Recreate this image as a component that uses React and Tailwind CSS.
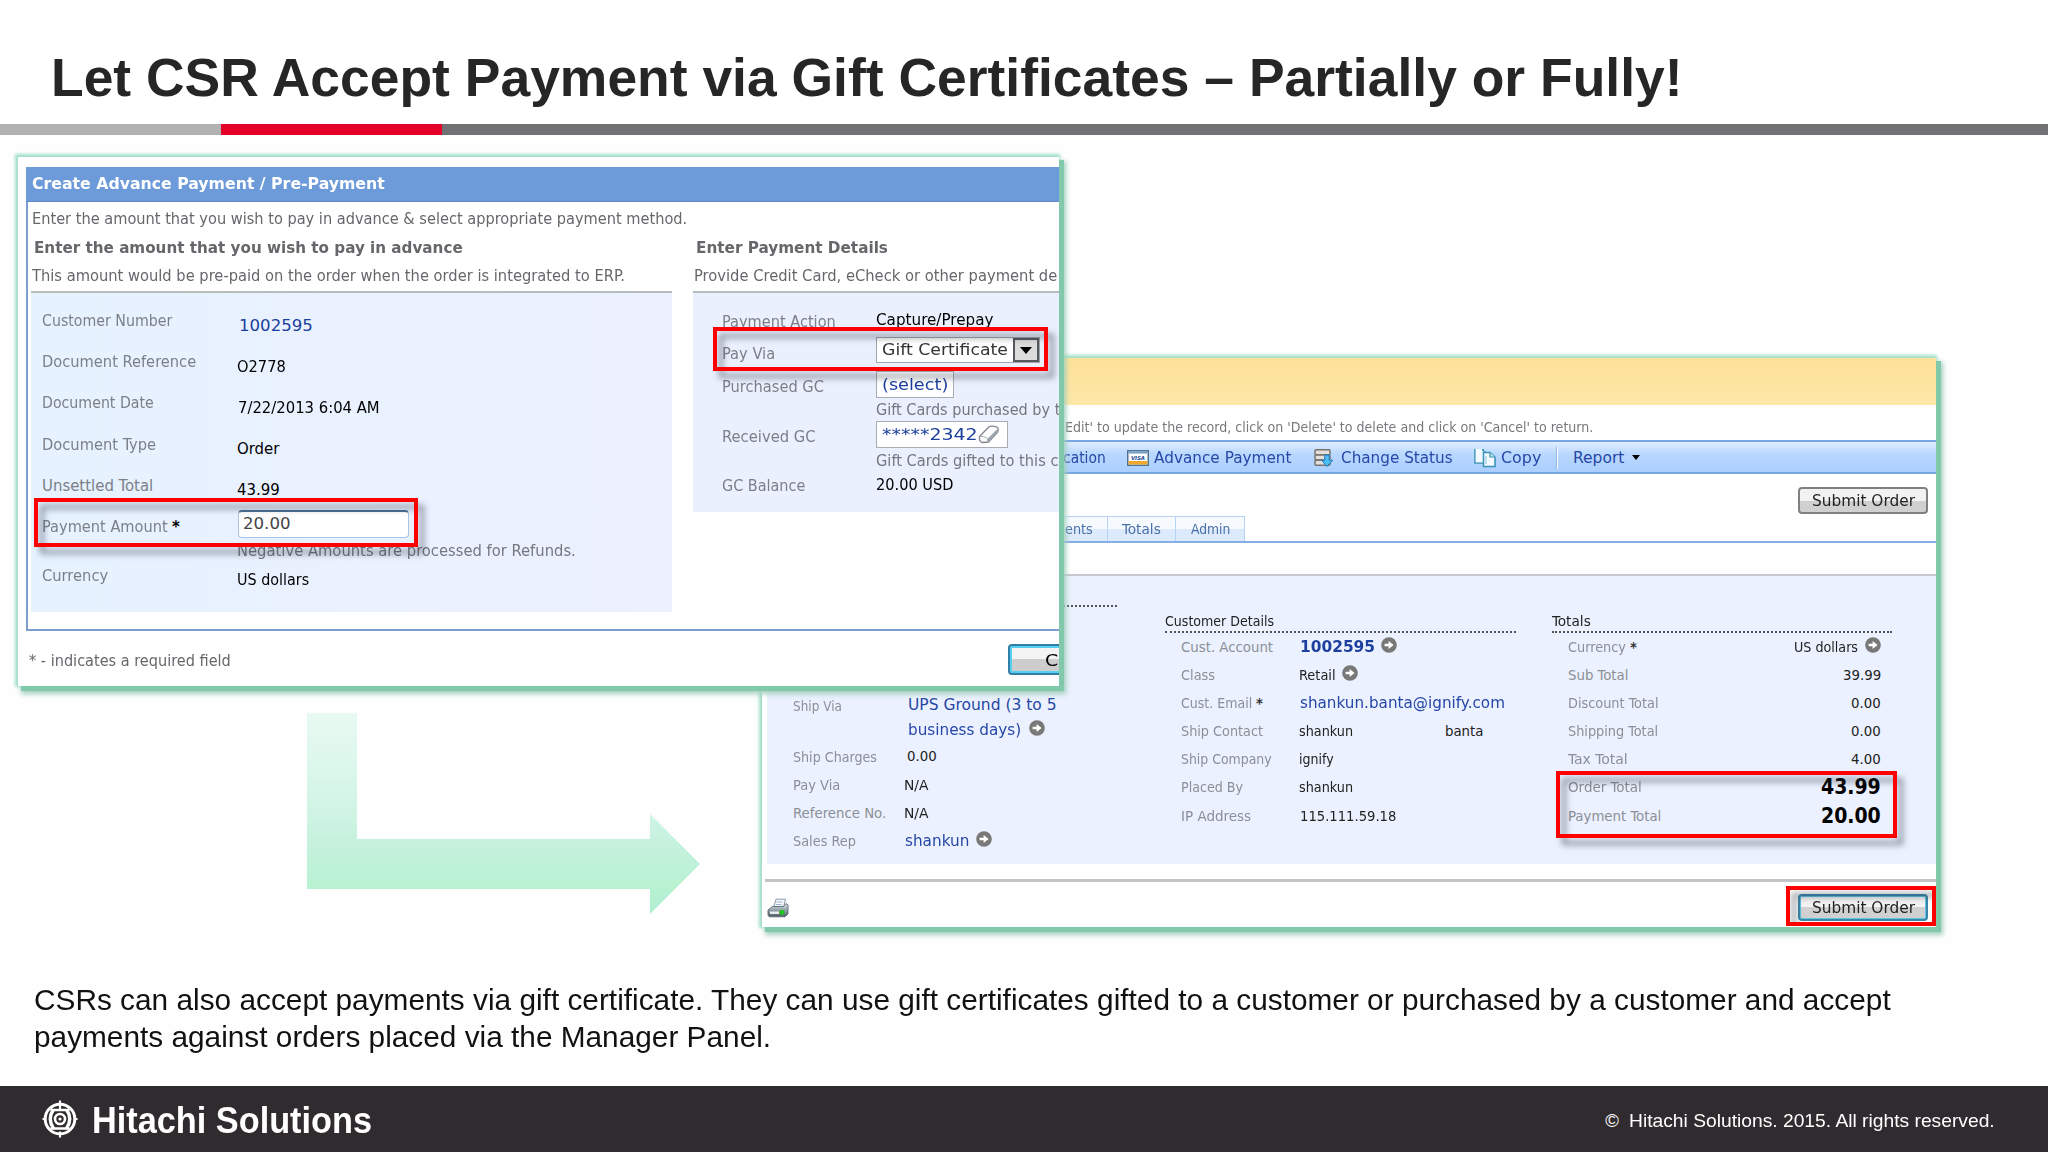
import { useLayoutEffect, useRef, useState } from "react";

const TAHOMA = "font-['DejaVu_Sans_Condensed','DejaVu_Sans',sans-serif]";
const VERDANA = "font-['DejaVu_Sans',sans-serif]";
const ARIAL = "font-['Liberation_Sans',sans-serif]";

/* A single line of text condensed or stretched to an exact width. */
function T({ w, className = "", children }) {
  const ref = useRef(null);
  const [scale, setScale] = useState(1);
  useLayoutEffect(() => {
    if (w) setScale(w / ref.current.offsetWidth);
  }, [w]);
  return (
    <span className={"block whitespace-nowrap " + className} style={w ? { width: w } : undefined}>
      <span
        ref={ref}
        className="inline-block origin-left whitespace-nowrap"
        style={{ transform: `scaleX(${scale})` }}
      >
        {children}
      </span>
    </span>
  );
}

function GoIcon({ className = "" }) {
  return (
    <svg viewBox="0 0 16 16" className={"h-4 w-4 shrink-0 " + className}>
      <circle cx="8" cy="8" r="7.8" fill="#787878" />
      <path d="M3.6 6.7h4V3.9L12.6 8l-5 4.1V9.3h-4z" fill="#fff" />
    </svg>
  );
}

function VisaIcon() {
  return (
    <svg viewBox="0 0 22 16" className="h-4 w-[22px] shrink-0">
      <rect x=".75" y=".75" width="20.5" height="14.5" fill="#fff" stroke="#4f7391" strokeWidth="1.5" />
      <rect x="1.5" y="1.5" width="19" height="2" fill="#6d9cc4" />
      <rect x="1.5" y="11" width="19" height="3.5" fill="#f0a72e" />
      <text x="4" y="9.6" fontSize="5.4" fontWeight="bold" fontStyle="italic" fill="#1e4c9a" textLength="14" className="font-['DejaVu_Sans',sans-serif]">
        VISA
      </text>
    </svg>
  );
}

function StatusIcon() {
  return (
    <svg viewBox="0 0 20 18" className="h-[18px] w-5 shrink-0">
      <g fill="#e4e1dc" stroke="#77736e" strokeWidth="1.5">
        <rect x="1" y=".8" width="15" height="5" rx="1.2" />
        <rect x="1" y="6" width="15" height="5" rx="1.2" />
        <rect x="1" y="11.2" width="15" height="5" rx="1.2" />
      </g>
      <path d="M10.8 6h4.4v5.2h3.6L13 17.4l-5.600-6.200h3.400z" fill="#4cc0f4" stroke="#2277bd" strokeWidth="1" />
    </svg>
  );
}

function CopyIcon() {
  return (
    <svg viewBox="0 0 22 20" className="h-5 w-[22px] shrink-0">
      <path d="M1 1v14h10" fill="#eef8fd" stroke="#3b93b5" strokeWidth="1.6" />
      <path d="M1.700 1h8.300v13.300H1.700z" fill="#f3fafe" />
      <path d="M8 1.500l3.500 3M9.500 1v3.500h3" fill="none" stroke="#3b93b5" strokeWidth="1.2" />
      <path d="M9.500 4.500h6.500l5 4.500v9.500H9.500z" fill="#f3fafe" stroke="#3b93b5" strokeWidth="1.600" />
      <path d="M16 4.500V9h5" fill="#bfe2f2" stroke="#3b93b5" strokeWidth="1.200" />
      <path d="M12 8v8" stroke="#8cc4dc" strokeWidth="1" />
    </svg>
  );
}

function PrinterIcon() {
  return (
    <svg viewBox="0 0 22 20" className="h-5 w-[22px]">
      <defs>
        <linearGradient id="prn" x1="0" y1="0" x2="0" y2="1">
          <stop offset="0" stopColor="#dfe5e9" />
          <stop offset=".5" stopColor="#93a0a8" />
          <stop offset="1" stopColor="#4b5962" />
        </linearGradient>
      </defs>
      <path d="M6.500 9.500L9 1.200h9.500L16.500 9.500z" fill="#f7fafd" stroke="#8a97a5" strokeWidth="1" />
      <path d="M9.500 4h6M8.800 6.500h6" stroke="#9fb3cf" strokeWidth="1" />
      <path d="M1 12l4.500-3.500h11L19 5.500l2 1.500v9l-3 2.800H2.500L1 17.500z" fill="url(#prn)" stroke="#5b6973" strokeWidth=".9" />
      <rect x="3" y="13.500" width="9" height="2.500" fill="#e8edf0" />
      <circle cx="15" cy="14.300" r="2.600" fill="#22c322" />
    </svg>
  );
}

function EraserIcon() {
  return (
    <svg viewBox="0 0 22 19" className="h-[19px] w-[22px] shrink-0">
      <path d="M1.500 11.500L10.500 2.200Q12.500.8 15 1.200L19 2Q20.800 3 20.200 5L19.500 7.500 10.500 17 4 17.500Q1 16.500 1.500 11.500z" fill="#fdfdfd" stroke="#84878e" strokeWidth="1.300" />
      <path d="M19.800 3.500L9.800 13.500 10 17.200 19.800 7.200z" fill="#9da4b0" />
      <path d="M2 11.500Q5 10.500 9.500 13.500V17" fill="none" stroke="#a8acb4" strokeWidth="1" />
    </svg>
  );
}

function HitachiMark() {
  return (
    <svg viewBox="0 0 36 38" className="h-[38px] w-9 shrink-0" fill="none" stroke="#fff">
      <circle cx="18" cy="19" r="14.8" strokeWidth="3" />
      <circle cx="18" cy="19" r="5" strokeWidth="2.600" />
      <circle cx="18" cy="19" r="1.600" fill="#fff" stroke="none" />
      <path d="M8.500 10h19M8.500 28.500h19" strokeWidth="2.600" />
      <path d="M11.500 9.500q-6.500 9.500 0 19M24.500 9.500q6.500 9.500 0 19" strokeWidth="3.400" />
      <path d="M18 .5v9M18 31.500v6M.5 19h3M32.500 19h3" strokeWidth="2.200" />
    </svg>
  );
}

function RedBox({ className }) {
  return (
    <div className={"absolute border-4 border-[#fe0000] drop-shadow-[6px_7px_3px_rgba(40,45,60,0.5)] " + className} />
  );
}

const PANEL =
  "absolute overflow-visible bg-white shadow-[4px_4px_0_1px_#82c8ab,5px_6px_5px_2px_#a3cfbc,-1px_-1px_3px_2px_#a2e0c8]";

function Field({ label, lw, className = "", children }) {
  return (
    <div className={"flex items-start " + className}>
      <div className="w-[195px] shrink-0 text-[#7c7f86]">
        <div className="flex gap-1">
          <T w={lw}>{label}</T>
          {label === "Payment Amount" && <span className="font-bold text-black">*</span>}
        </div>
      </div>
      <div className="text-black">{children}</div>
    </div>
  );
}

function PayField({ label, lw, labelPad = "", className = "", children }) {
  return (
    <div className={"flex items-start " + className}>
      <div className={"w-[154px] shrink-0 text-[#7c7f86] " + labelPad}>
        <T w={lw}>{label}</T>
      </div>
      <div className="text-black">{children}</div>
    </div>
  );
}

function PaymentPanel() {
  return (
    <div className={PANEL + " left-[18px] top-[22px] h-[529px] w-[1041px] text-[16.6px] leading-5 " + TAHOMA}>
      <div className="flex h-full flex-col overflow-hidden pl-2 pt-2.5">
        <div className="h-[464px] border-b-2 border-l-2 border-[#7b9fcf]">
          <div className="-ml-0.5 flex h-[35px] items-center border-b border-[#6288c6] bg-[#6d9bda] pl-1.5 font-bold text-white">
            <T w={353}>Create Advance Payment / Pre-Payment</T>
          </div>
          <div className="pl-1 pt-[7px] text-[#66676b]">
            <T w={655}>Enter the amount that you wish to pay in advance &amp; select appropriate payment method.</T>
          </div>
          <div className="flex pl-[3px] pt-[9px] text-[#66676b]">
            <div className="w-[641px] shrink-0">
              <T w={429} className="ml-[3px] font-bold">Enter the amount that you wish to pay in advance</T>
              <T w={593} className="ml-px mt-2">This amount would be pre-paid on the order when the order is integrated to ERP.</T>
              <div className="mt-[5px] h-[321px] border-t-2 border-[#b4bcbc] bg-linear-to-r from-[#e6f2ff] via-[#eaf1ff] to-[#ecf0ff] pl-[11px] pt-[18px]">
                <Field label="Customer Number" lw={130} className="h-[41px]">
                  <div className={"ml-0.5 pt-[5px] text-[#1b3f9c] " + VERDANA}>
                    <T w={74}>1002595</T>
                  </div>
                </Field>
                <Field label="Document Reference" lw={154} className="h-[41px]">
                  <T w={49} className="pt-[5px]">O2778</T>
                </Field>
                <Field label="Document Date" lw={112} className="h-[42px]">
                  <T w={142} className="ml-px pt-[5px]">7/22/2013 6:04 AM</T>
                </Field>
                <Field label="Document Type" lw={114} className="h-[41px]">
                  <T w={42} className="pt-1">Order</T>
                </Field>
                <Field label="Unsettled Total" lw={111} className="h-[41px]">
                  <T w={43} className="pt-1">43.99</T>
                </Field>
                <Field label="Payment Amount" lw={126} className="h-[49px]">
                  <div className={"-mt-[7px] ml-px flex h-7 w-[171px] items-center rounded-sm border border-[#a9c4e0] border-t-2 border-t-[#4a7099] bg-white pb-px pl-1 text-[#444] " + VERDANA}>
                    <T w={48}>20.00</T>
                  </div>
                  <T w={339} className="mt-[3px] text-[#74777d]">Negative Amounts are processed for Refunds.</T>
                </Field>
                <Field label="Currency" lw={66}>
                  <T w={72} className="pt-1">US dollars</T>
                </Field>
              </div>
            </div>
            <div className="ml-[21px] w-[367px] shrink-0">
              <T w={192} className="ml-[3px] font-bold">Enter Payment Details</T>
              <T w={363} className="ml-px mt-2">Provide Credit Card, eCheck or other payment de</T>
              <div className="mt-[5px] h-[221px] border-t-2 border-[#b4bcbc] bg-[#ebf0fe] pl-[29px] pt-[17px]">
                <PayField label="Payment Action" lw={114} labelPad="pt-0.5" className="h-[27px]">
                  <T w={117}>Capture/Prepay</T>
                </PayField>
                <PayField label="Pay Via" lw={53} labelPad="pt-[7px]" className="h-[34px]">
                  <div className={"flex h-[26px] w-[164px] items-center justify-between border border-[#a0a4aa] bg-white pl-[5px] text-[#333] " + VERDANA}>
                    <T w={126}>Gift Certificate</T>
                    <div className="flex h-6 w-[26px] items-center justify-center border-2 border-[#55585c] bg-[#dcdcdc]">
                      <svg viewBox="0 0 12 7" className="h-[7px] w-3">
                        <path d="M0 0h12L6 7z" fill="#000" />
                      </svg>
                    </div>
                  </div>
                </PayField>
                <PayField label="Purchased GC" lw={102} labelPad="pt-1.5" className="h-[50px]">
                  <div className={"flex h-[27px] w-[78px] items-center border border-[#a9adb3] bg-white pl-[5px] pt-px text-[#1b3f9c] " + VERDANA}>
                    <T w={66}>(select)</T>
                  </div>
                  <T w={184} className="mt-[2px] text-[#74777d]">Gift Cards purchased by t</T>
                </PayField>
                <PayField label="Received GC" lw={94} labelPad="pt-1.5" className="h-[54px]">
                  <div className={"flex h-[27px] w-[132px] items-center border border-[#a9adb3] bg-white pl-[5px] text-[#1b3f9c] " + VERDANA}>
                    <T w={96} className="pt-px">*****2342</T>
                    <EraserIcon />
                  </div>
                  <T w={182} className="mt-[3px] text-[#74777d]">Gift Cards gifted to this c</T>
                </PayField>
                <PayField label="GC Balance" lw={83} labelPad="pt-px">
                  <T w={77}>20.00 USD</T>
                </PayField>
              </div>
            </div>
          </div>
        </div>
        <div className="flex items-start justify-between">
          <T w={202} className="ml-[3px] pt-5 text-[#66676b]">* - indicates a required field</T>
          <button className={"-mr-20 mt-[13px] flex h-[31px] w-[131px] items-center rounded border-2 border-[#2f7fa8] bg-linear-to-b from-[#f3f3f3] from-50% to-[#cdcdcd] to-50% pl-[31px] pt-0.5 text-[16.6px] text-black shadow-[inset_0_0_0_2px_#55d0f0] " + VERDANA}>
            <T w={64}>Cancel</T>
          </button>
        </div>
      </div>
      <RedBox className="left-4 top-[341px] h-[49px] w-[384px]" />
      <RedBox className="left-[695px] top-[170px] h-[44px] w-[335px]" />
    </div>
  );
}

function SubmitButton({ className }) {
  return (
    <button className={"flex h-[27px] w-[130px] items-center justify-center rounded border-2 bg-linear-to-b from-[#f2f2f2] from-50% to-[#d0d0d0] to-50% text-[15.5px] text-[#222] " + VERDANA + " " + className}>
      <T w={103}>Submit Order</T>
    </button>
  );
}

function Row({ label, lw, star, lwBox = "w-[119px]", className = "h-[28.1px]", children }) {
  return (
    <div className={"flex items-start " + className}>
      <div className={"flex shrink-0 gap-1 text-[#8b8f96] " + lwBox}>
        <T w={lw}>{label}</T>
        {star && <span className="font-bold text-[#333]">*</span>}
      </div>
      {children}
    </div>
  );
}

function TotalRow({ label, lw, star, children }) {
  return (
    <div className="flex h-[28.1px] items-start justify-between pl-4 pr-[11px]">
      <div className="flex gap-1 text-[#8b8f96]">
        <T w={lw}>{label}</T>
        {star && <span className="font-bold text-[#333]">*</span>}
      </div>
      {children}
    </div>
  );
}

function OrderPanel() {
  const link = "text-[15.5px] text-[#2647a6] " + VERDANA;
  return (
    <div className={PANEL + " left-[762px] top-[223px] h-[569px] w-[1174px] text-[14.8px] leading-5 " + TAHOMA}>
      <div className="flex h-full flex-col overflow-hidden">
        <div className="h-[47px] shrink-0 bg-linear-to-b from-[#fde197] to-[#fee7a8]" />
        <div className="flex h-[35px] shrink-0 justify-end pr-[343px] pt-3 text-[#77797c]">
          <T w={528}>Edit' to update the record, click on 'Delete' to delete and click on 'Cancel' to return.</T>
        </div>
        <div className={"flex h-[34px] shrink-0 items-center border-y-2 border-[#78a6e2] bg-linear-to-b from-[#e0edff] from-0% via-[#b9d8ff] via-40% to-[#abcfff] pl-[301px] pt-px " + link}>
          <T w={43}>cation</T>
          <div className="ml-[21px] flex items-center gap-[5px]">
            <VisaIcon />
            <T w={138}>Advance Payment</T>
          </div>
          <div className="ml-[22px] flex items-center gap-[7px]">
            <StatusIcon />
            <T w={112}>Change Status</T>
          </div>
          <div className="ml-[21px] flex items-center gap-[5px]">
            <CopyIcon />
            <T w={40}>Copy</T>
          </div>
          <div className="ml-[15px] h-[22px] w-0.5 border-l border-[#92b6e6] bg-white" />
          <T w={51} className="ml-[15px]">Report</T>
          <svg viewBox="0 0 8 5" className="ml-2 h-[5px] w-2">
            <path d="M0 0h8L4 5z" fill="#000" />
          </svg>
        </div>
        <div className="flex h-[69px] shrink-0 items-end justify-between border-b-2 border-[#85afe4] pl-[270px]">
          <div className="flex h-[25px] border-t border-[#b8d2f5] bg-linear-to-b from-[#f6faff] from-50% to-[#ddeafc] to-50% text-[#4a70a8]">
            <div className="flex w-[76px] items-center justify-end border-r border-[#b8d2f5] pr-3.5">
              <T w={28}>ents</T>
            </div>
            <div className="flex w-[68px] items-center justify-center border-r border-[#b8d2f5]">
              <T w={39}>Totals</T>
            </div>
            <div className="flex w-[69px] items-center justify-center border-r border-[#b8d2f5]">
              <T w={39}>Admin</T>
            </div>
          </div>
          <SubmitButton className="mb-[27px] mr-2 border-[#808080]" />
        </div>
        <div className="h-[31px] shrink-0" />
        <div className="ml-[5px] flex h-[290px] shrink-0 border-t-2 border-[#c6c9d0] bg-[#ebf1fe] pl-[11px]">
          <div className="w-[339px] shrink-0 pt-[29px]">
            <div className="border-t-2 border-dotted border-[#555]" />
            <div className="pl-[15px] pt-[88px]">
              <Row label="Ship Via" lw={49} lwBox="w-[115px] pt-px" className="h-[52px]">
                <div className={link}>
                  <T w={149}>UPS Ground (3 to 5</T>
                  <div className="mt-[5px] flex gap-2">
                    <T w={113}>business days)</T>
                    <GoIcon />
                  </div>
                </div>
              </Row>
              <Row label="Ship Charges" lw={84} lwBox="w-[114px]">
                <T w={30} className="-mt-px text-[#222]">0.00</T>
              </Row>
              <Row label="Pay Via" lw={47} lwBox="w-[111px]">
                <T w={25} className="text-[#222]">N/A</T>
              </Row>
              <Row label="Reference No." lw={93} lwBox="w-[111px]">
                <T w={25} className="text-[#222]">N/A</T>
              </Row>
              <Row label="Sales Rep" lw={63} lwBox="w-[112px]">
                <div className={"flex gap-[7px] " + link}>
                  <T w={64}>shankun</T>
                  <GoIcon />
                </div>
              </Row>
            </div>
          </div>
          <div className="ml-12 w-[351px] shrink-0 pt-[35px] text-[#222]">
            <div className="mb-1 border-b-2 border-dotted border-[#555]">
              <T w={109}>Customer Details</T>
            </div>
            <div className="pl-4">
              <Row label="Cust. Account" lw={92}>
                <div className={"flex gap-1.5 font-bold text-[15px] text-[#1d3f9e] " + VERDANA}>
                  <T w={75}>1002595</T>
                  <GoIcon />
                </div>
              </Row>
              <Row label="Class" lw={34} lwBox="w-[118px]">
                <div className="flex gap-1.5">
                  <T w={37}>Retail</T>
                  <GoIcon />
                </div>
              </Row>
              <Row label="Cust. Email" lw={71} star>
                <div className={link}>
                  <T w={205}>shankun.banta@ignify.com</T>
                </div>
              </Row>
              <Row label="Ship Contact" lw={82} lwBox="w-[118px]">
                <T w={54}>shankun</T>
                <T w={38} className="ml-[92px]">banta</T>
              </Row>
              <Row label="Ship Company" lw={91} lwBox="w-[118px]">
                <T w={35}>ignify</T>
              </Row>
              <Row label="Placed By" lw={62} lwBox="w-[118px]">
                <T w={54}>shankun</T>
              </Row>
              <Row label="IP Address" lw={70}>
                <T w={96}>115.111.59.18</T>
              </Row>
            </div>
          </div>
          <div className="ml-9 w-[340px] shrink-0 pt-[35px] text-[#222]">
            <div className="mb-1 border-b-2 border-dotted border-[#555]">
              <T w={39}>Totals</T>
            </div>
            <TotalRow label="Currency" lw={58} star>
              <div className="flex gap-[7px]">
                <T w={64}>US dollars</T>
                <GoIcon />
              </div>
            </TotalRow>
            <TotalRow label="Sub Total" lw={60}>
              <T w={38}>39.99</T>
            </TotalRow>
            <TotalRow label="Discount Total" lw={91}>
              <T w={30}>0.00</T>
            </TotalRow>
            <TotalRow label="Shipping Total" lw={90}>
              <T w={30}>0.00</T>
            </TotalRow>
            <TotalRow label="Tax Total" lw={60}>
              <T w={30}>4.00</T>
            </TotalRow>
            <TotalRow label="Order Total" lw={74}>
              <T w={60} className="text-[21px] font-bold text-black">43.99</T>
            </TotalRow>
            <TotalRow label="Payment Total" lw={93}>
              <T w={60} className="text-[21px] font-bold text-black">20.00</T>
            </TotalRow>
          </div>
        </div>
        <div className="ml-[3px] flex h-[63px] shrink-0 flex-col bg-white pt-[15px]">
          <div className="border-t-[3px] border-[#c3c4c6]" />
          <div className="flex items-start justify-between pl-0.5 pr-2">
            <div className="pt-4">
              <PrinterIcon />
            </div>
            <SubmitButton className="mt-3 border-[#3a87ab] shadow-[inset_0_0_0_1px_#5cc4e4]" />
          </div>
        </div>
      </div>
      <RedBox className="left-[794px] top-[413px] h-[67px] w-[341px]" />
      <div className="absolute left-[1024px] top-[528px] h-10 w-[150px] overflow-hidden">
        <RedBox className="inset-0" />
      </div>
    </div>
  );
}

export default function App() {
  return (
    <div className={"flex h-[1152px] w-[2048px] flex-col overflow-hidden bg-white text-black " + ARIAL}>
      <header className="shrink-0">
        <h1 className="flex h-[124px] items-end pb-4 pl-[51px] text-[54px] font-bold leading-[62px] text-[#262626]">
          <T w={1632}>Let CSR Accept Payment via Gift Certificates – Partially or Fully!</T>
        </h1>
        <div className="flex h-[11px]">
          <div className="w-[221px] bg-[#b1b1b1]" />
          <div className="w-[221px] bg-[#e60027]" />
          <div className="flex-1 bg-[#727174]" />
        </div>
      </header>

      <main className="relative h-[844px] shrink-0 bg-[#fefefe]">
        <svg viewBox="0 0 393 201" className="absolute left-[307px] top-[578px] h-[201px] w-[393px]">
          <defs>
            <linearGradient id="arrow" x1="0" y1="0" x2="0" y2="1">
              <stop offset="0" stopColor="#e9faf2" />
              <stop offset=".45" stopColor="#d2f5e6" />
              <stop offset=".65" stopColor="#c6f1dd" />
              <stop offset=".85" stopColor="#b9f2d3" />
              <stop offset="1" stopColor="#aeefd0" />
            </linearGradient>
          </defs>
          <path d="M0 0h50v126h293v-25l50 50-50 50v-25H0z" fill="url(#arrow)" />
        </svg>
        <OrderPanel />
        <PaymentPanel />
      </main>

      <section className="h-[107px] shrink-0 bg-[#fefefe] pl-[34px] pt-[3px] text-[30px] leading-[36.5px] text-[#111]">
        <T w={1857}>CSRs can also accept payments via gift certificate. They can use gift certificates gifted to a customer or purchased by a customer and accept</T>
        <T w={737}>payments against orders placed via the Manager Panel.</T>
      </section>

      <footer className="flex h-[66px] shrink-0 items-center justify-between bg-[#2f2b2f] pl-[42px] pr-[53px] text-white">
        <div className="flex items-center gap-[14px]">
          <HitachiMark />
          <T w={280} className="pt-[3px] text-[36px] font-bold leading-[40px]">Hitachi Solutions</T>
        </div>
        <div className="flex gap-2.5 pt-1 text-[18.5px]">
          <span>©</span>
          <T w={366}>Hitachi Solutions. 2015. All rights reserved.</T>
        </div>
      </footer>
    </div>
  );
}
